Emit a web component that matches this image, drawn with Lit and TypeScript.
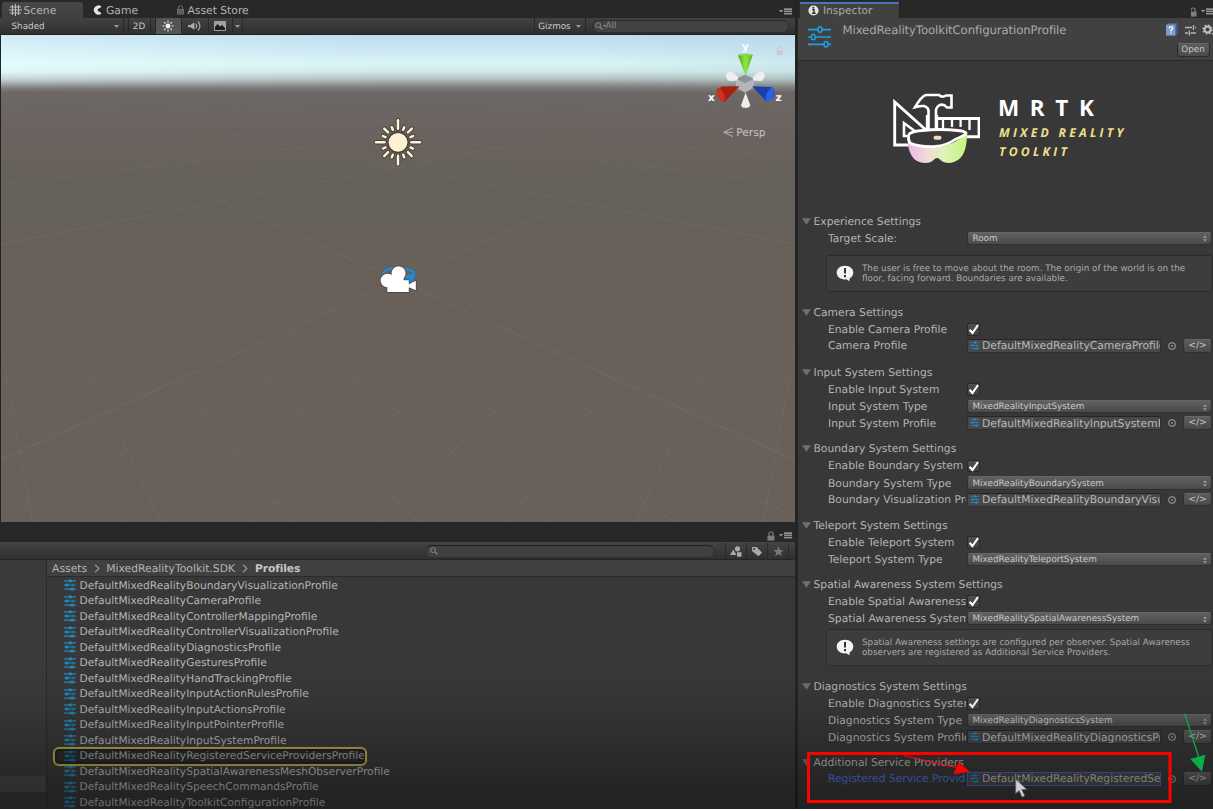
import { LitElement, html, svg, css, nothing } from "lit";
import { customElement } from "lit/decorators.js";
import { classMap } from "lit/directives/class-map.js";

type Row =
  | { kind: "check"; label: string }
  | { kind: "popup"; label: string; value: string }
  | { kind: "object"; label: string; value: string; active?: boolean }
  | { kind: "help"; lines: string[] };

interface Section { title: string; rows: Row[]; }

const SECTIONS: Section[] = [
  { title: "Experience Settings", rows: [
    { kind: "popup", label: "Target Scale:", value: "Room" },
    { kind: "help", lines: ["The user is free to move about the room. The origin of the world is on the", "floor, facing forward. Boundaries are available."] },
  ] },
  { title: "Camera Settings", rows: [
    { kind: "check", label: "Enable Camera Profile" },
    { kind: "object", label: "Camera Profile", value: "DefaultMixedRealityCameraProfile" },
  ] },
  { title: "Input System Settings", rows: [
    { kind: "check", label: "Enable Input System" },
    { kind: "popup", label: "Input System Type", value: "MixedRealityInputSystem" },
    { kind: "object", label: "Input System Profile", value: "DefaultMixedRealityInputSystemProfile" },
  ] },
  { title: "Boundary System Settings", rows: [
    { kind: "check", label: "Enable Boundary System" },
    { kind: "popup", label: "Boundary System Type", value: "MixedRealityBoundarySystem" },
    { kind: "object", label: "Boundary Visualization Profile", value: "DefaultMixedRealityBoundaryVisualizationProfile" },
  ] },
  { title: "Teleport System Settings", rows: [
    { kind: "check", label: "Enable Teleport System" },
    { kind: "popup", label: "Teleport System Type", value: "MixedRealityTeleportSystem" },
  ] },
  { title: "Spatial Awareness System Settings", rows: [
    { kind: "check", label: "Enable Spatial Awareness System" },
    { kind: "popup", label: "Spatial Awareness System Type", value: "MixedRealitySpatialAwarenessSystem" },
    { kind: "help", lines: ["Spatial Awareness settings are configured per observer. Spatial Awareness", "observers are registered as Additional Service Providers."] },
  ] },
  { title: "Diagnostics System Settings", rows: [
    { kind: "check", label: "Enable Diagnostics System" },
    { kind: "popup", label: "Diagnostics System Type", value: "MixedRealityDiagnosticsSystem" },
    { kind: "object", label: "Diagnostics System Profile", value: "DefaultMixedRealityDiagnosticsProfile" },
  ] },
  { title: "Additional Service Providers", rows: [
    { kind: "object", label: "Registered Service Providers", value: "DefaultMixedRealityRegisteredServiceProvidersProfile", active: true },
  ] },
];

const ASSETS = [
  "BoundaryVisualization", "Camera", "ControllerMapping", "ControllerVisualization", "Diagnostics",
  "Gestures", "HandTracking", "InputActionRules", "InputActions", "InputPointer", "InputSystem",
  "RegisteredServiceProviders", "SpatialAwarenessMeshObserver", "SpeechCommands", "ToolkitConfiguration",
].map((n) => `DefaultMixedReality${n}Profile`);
const PINGED = "DefaultMixedRealityRegisteredServiceProvidersProfile";

const sliders = (w = 12, h = 12) => html`<svg width=${w} height=${h} viewBox="0 0 12 12" fill="none" stroke="#2389ba">
  <path d="M0 1.900H12M0 6H12M0 10.100H12" stroke-width="1.100"/>
  <g fill="#2389ba" stroke="none"><circle cx="6.400" cy="1.900" r="1.700"/><circle cx="2.900" cy="6" r="1.700"/><circle cx="8.300" cy="10.100" r="1.700"/></g>
  <path d="M9 4.400v3.200M6 8.500v3.200" stroke-width=".8"/></svg>`;

const lock = (color: string) => html`<svg width="8" height="10" viewBox="0 0 8 10"><rect x=".5" y="4.600" width="7" height="5" fill=${color}/><path d="M2 4.800V3Q2 1 4 1T6 3V4.800" fill="none" stroke=${color} stroke-width="1.200"/></svg>`;

const paneMenu = html`<svg width="13" height="7" viewBox="0 0 13 7"><path d="M0 2h4.200L2.100 4.400z" fill="#999"/><path d="M5 1.100h8M5 3.400h8M5 5.700h8" stroke="#8e8e8e" stroke-width="1.600"/></svg>`;

const magnifier = html`<svg width="8" height="8" viewBox="0 0 8 8" fill="none" stroke="#7c7c7c"><circle cx="3.100" cy="3.100" r="2.400" stroke-width="1.100"/><path d="M5 5l2.600 2.600" stroke-width="1.500"/></svg>`;

/* Perspective grid: lines converge on two vanishing points of the horizon. */
function gridLines() {
  const horizon = 45, cx = 397, v = 444;
  const out = { major: [] as unknown[], minor: [] as unknown[] };
  for (let n = -3; n <= 34; n++) {
    const major = (n - 4) % 10 === 0;
    if (n > 20 && !major) continue;
    const dy = 1 / (0.002364 + 0.000655 * n);
    for (const s of [-1, 1]) {
      const vx = cx + s * v;
      const k = 6;
      out[major ? "major" : "minor"].push(svg`<line x1=${vx} y1=${horizon} x2=${vx - s * v * k} y2=${horizon + dy * k}/>`);
    }
  }
  return out;
}

@customElement("scene-view")
export class SceneView extends LitElement {
  static styles = css`
    :host { display: block; height: 487px; border-left: 1px solid #222; position: relative; overflow: hidden; box-sizing: border-box; }
    svg { display: block; width: 794px; height: 487px; }
    .minor { stroke: #a8ada0; stroke-opacity: .15; stroke-width: .9; }
    .major { stroke: #a8ada0; stroke-opacity: .17; stroke-width: 1; }
    text { font-family: "DejaVu Sans", sans-serif; text-rendering: geometricPrecision; }
    .axis { font-size: 10.5px; font-weight: 700; fill: #fff; text-anchor: middle; }
    .persp { font-size: 10.6px; fill: #c8c6c4; }
  `;
  render() {
    const grid = gridLines();
    const rays = Array.from({ length: 16 }, (_, i) => {
      const a = (i * Math.PI) / 8;
      const [r0, r1] = i % 4 === 0 ? [13.5, 22] : i % 2 === 0 ? [14, 19.5] : [13.5, 16.3];
      return svg`<line x1=${397 + r0 * Math.cos(a)} y1=${107.3 + r0 * Math.sin(a)} x2=${397 + r1 * Math.cos(a)} y2=${107.3 + r1 * Math.sin(a)}/>`;
    });
    return html`<svg viewBox="0 0 794 487">
      <defs>
        <linearGradient id="sky" x1="0" x2="0" y1="0" y2="1">
          <stop offset="0" stop-color="#bfdcee"/><stop offset=".027" stop-color="#c9e5f2"/><stop offset=".058" stop-color="#daf4f6"/>
          <stop offset=".074" stop-color="#d2ebea"/><stop offset=".09" stop-color="#b3c4c2"/><stop offset=".105" stop-color="#858684"/>
          <stop offset=".118" stop-color="#6d6866"/><stop offset=".2" stop-color="#6a625e"/><stop offset=".33" stop-color="#65605a"/>
          <stop offset=".5" stop-color="#686059"/><stop offset="1" stop-color="#696059"/>
        </linearGradient>
        <linearGradient id="glow" x1="0" x2="1" y1="0" y2="0"><stop offset="0" stop-color="#e6ffff" stop-opacity=".7"/><stop offset=".5" stop-color="#e6ffff" stop-opacity="0"/><stop offset=".75" stop-color="#9fc4d4" stop-opacity="0"/><stop offset="1" stop-color="#9fc4d4" stop-opacity=".22"/></linearGradient>
        <linearGradient id="drop" x1="0" x2="0" y1="0" y2="1"><stop offset="0" stop-color="#fff" stop-opacity=".55"/><stop offset=".6" stop-color="#fff"/><stop offset="1" stop-color="#fff" stop-opacity="0"/></linearGradient>
        <linearGradient id="far" x1="0" x2="0" y1="0" y2="1"><stop offset=".12" stop-color="#000"/><stop offset=".24" stop-color="#777"/><stop offset=".45" stop-color="#aaa"/><stop offset="1" stop-color="#fff"/></linearGradient>
        <linearGradient id="near" x1="0" x2="0" y1="0" y2="1"><stop offset=".22" stop-color="#000"/><stop offset=".36" stop-color="#4a4a4a"/><stop offset=".55" stop-color="#808080"/><stop offset="1" stop-color="#eee"/></linearGradient>
        <linearGradient id="green" x1="0" x2="1"><stop offset="0" stop-color="#4f9c1c"/><stop offset=".5" stop-color="#8ce944"/><stop offset="1" stop-color="#5fb327"/></linearGradient>
        <mask id="skyMask"><rect width="794" height="54" fill="url(#drop)"/></mask>
        <mask id="majorMask"><rect width="794" height="487" fill="url(#far)"/></mask>
        <mask id="minorMask"><rect width="794" height="487" fill="url(#near)"/></mask>
      </defs>
      <rect width="794" height="487" fill="url(#sky)"/>
      <rect width="794" height="54" fill="url(#glow)" mask="url(#skyMask)"/>
      <g mask="url(#minorMask)"><g class="minor">${grid.minor}</g></g>
      <g mask="url(#majorMask)"><g class="major">${grid.major}</g></g>
      <g stroke-linecap="round"><g stroke="#45413c" stroke-width="4.400">${rays}</g><circle cx="397" cy="107.300" r="10.800" fill="#45413c"/><g stroke="#fff3d8" stroke-width="2.500">${rays}</g></g>
      <circle cx="397" cy="107.300" r="9.400" fill="#fff0d2"/>
      <path d="M382 239Q383 235 389 234Q397 232.800 406 234.500Q413.500 235.500 413 239Q412 246 406 249" fill="none" stroke="#1c8ad6" stroke-width="2.300"/>
      <path d="M404 241l8.500-3v8l-4 3h-4z" fill="#1c8ad6"/>
      <g fill="#fff" stroke="#4b4742" stroke-width="1.600" paint-order="stroke" stroke-linejoin="round" transform="translate(-.7 .8)"><path d="M387 256.300V251.500A6.800 6.800 0 1 1 391.500 239.500A7 7 0 1 1 404 241.500Q402.500 244 404 244.500H408.500V248.500L415.500 245V254.500L408.500 251.500V256.300Z"/></g>
      <g>
        <path d="M744 39.700l9 4.200v8.600l-9 5.200-9-5.200v-8.600z" fill="#b3b5b9"/><path d="M735 43.900l9 4 9-4-9-4.200z" fill="#8e9095"/>
        <path d="M725 40q1.500-4 5.500-3.500l6.800 5.800-1 3.300-8 .5Q725 44 725 40z" fill="#eee"/><path d="M763.800 40q-1.500-4-5.500-3.500l-6.800 5.800 1 3.300 8 .5Q763.800 44 763.800 40z" fill="#eee"/>
        <path d="M736.800 20h15L744.800 41z" fill="url(#green)"/><ellipse cx="744.300" cy="20" rx="7.400" ry="1.300" fill="#86d548"/>
        <path d="M738.500 51.200L721 51.600Q715 54 717 62L723.500 67Z" fill="#a81f12"/><ellipse cx="719.600" cy="59.700" rx="3.200" ry="7.500" transform="rotate(-24 719.600 59.700)" fill="#c93320"/>
        <path d="M751 51.200L769.500 52Q775.500 54 772.500 62L766 67Z" fill="#1c3fae"/><ellipse cx="769" cy="59.700" rx="3.400" ry="7.500" transform="rotate(24 769 59.700)" fill="#2f5fe4"/>
        <path d="M744.600 57.500l-4.600 13q1 2.500 4.600 2.500t4.800-2.500z" fill="#ececec"/>
      </g>
      <text class="axis" x="744.500" y="15">y</text><text class="axis" x="710.500" y="66">x</text><text class="axis" x="777.500" y="66">z</text>
      <g opacity=".65"><rect x="775.500" y="15.300" width="6.600" height="4.900" fill="#c9bfc0"/><path d="M776.800 15.500v-2q0-1.500 2-1.500t2 1.500v2" fill="none" stroke="#c9bfc0"/></g>
      <path d="M732 92.800l-9.300 4.500 9.300 4.300M723 97.300h9" fill="none" stroke="#b5b1ae" stroke-width="1"/>
      <text class="persp" x="735.300" y="101">Persp</text>
    </svg>`;
  }
}

@customElement("inspector-row")
export class InspectorRow extends LitElement {
  static properties = { row: { attribute: false } };
  declare row: Row;
  static styles = css`
    :host { display: block; }
    .row { display: flex; align-items: center; height: 17.3px; padding-left: 30px; }
    .row.object { margin-top: -.8px; }
    .label { width: 138px; margin-right: 1px; flex: none; overflow: hidden; white-space: nowrap; line-height: 17px; }
    .active .label { color: #4a74d8; }
    .popup { flex: none; width: 245px; height: 13.5px; box-sizing: border-box; border-radius: 3px; border: 1px solid #303030; border-top-color: #666; background: linear-gradient(#606060, #4a4a4a); font-size: 8.82px; line-height: 12px; padding: 1px 4px 0 4.5px; display: flex; justify-content: space-between; align-items: center; color: #cacaca; }
    .tick { width: 12.5px; height: 12.5px; box-sizing: border-box; background: linear-gradient(#4f4f4f, #404040); border: 1px solid #292929; border-radius: 2px; }
    .tick svg { display: block; margin: -1.2px 0 0 .3px; overflow: visible; }
    .field { width: 194px; height: 13.7px; box-sizing: border-box; flex: none; background: #484848; border: 1px solid #303030; border-top-color: #252525; display: flex; align-items: center; padding-left: 2px; gap: 2.5px; overflow: hidden; white-space: nowrap; line-height: 13px; color: #b9b9b9; }
    .field svg { flex: none; margin-bottom: .5px; }
    .active .field { border-color: #3f62c0; }
    .pick { width: 8px; height: 8px; margin: 0 7.5px 0 6.5px; flex: none; }
    .code { width: 29px; height: 13.5px; flex: none; box-sizing: border-box; border: 1px solid #303030; border-top-color: #666; border-radius: 3px; background: linear-gradient(#5c5c5c, #494949); font-size: 9.3px; line-height: 11.5px; text-align: center; color: #c4c4c4; }
    .help { margin: 8px 0 0 28px; height: 37px; width: 387px; box-sizing: border-box; border: 1px solid #2b2b2b; border-radius: 3px; background: #3d3d3d; display: flex; align-items: center; padding-left: 9px; gap: 8px; font-size: 8.78px; line-height: 10.3px; color: #a9a9a9; white-space: nowrap; }
    .help div:first-of-type { padding-top: .4px; }
    .help.tight { margin-top: 2px; }
  `;
  render() {
    const r = this.row;
    if (r.kind === "help") {
      return html`<div class=${classMap({ help: true, tight: r.lines[0].startsWith("Spatial") })}>
        <svg width="18" height="17" viewBox="0 0 18 17"><path d="M9 .8C13.600.8 17.300 3.700 17.300 7.600 17.300 10.600 15.400 12.600 13.600 13.500L13.400 16.200 10.300 14.300Q9 14.500 8 14.400C3.700 14.200.7 11.300.7 7.600.7 3.700 4.400.8 9 .8z" fill="#f4f4f4"/><path d="M9 3v5.600M9 10v2.200" stroke="#333" stroke-width="2"/></svg>
        <div>${r.lines.map((l) => html`<div>${l}</div>`)}</div></div>`;
    }
    return html`<div class=${classMap({ row: true, object: r.kind === "object", active: r.kind === "object" && !!r.active })}>
      <div class="label">${r.label}</div>
      ${r.kind === "check" ? html`<div class="tick"><svg width="11" height="12" viewBox="0 0 11 12"><path d="M1.600 6.800L4.400 10 10 2" fill="none" stroke="#fff" stroke-width="2.100"/></svg></div>` : nothing}
      ${r.kind === "popup" ? html`<div class="popup"><span>${r.value}</span><svg width="4" height="7" viewBox="0 0 4 7"><path d="M0 2.800L2 .3 4 2.800zM0 4.200L2 6.700 4 4.200z" fill="#999"/></svg></div>` : nothing}
      ${r.kind === "object" ? html`<div class="field">${sliders(9.5, 9)}<span>${r.value}</span></div>
        <svg class="pick" viewBox="0 0 7 7"><circle cx="3.500" cy="3.500" r="2.900" fill="none" stroke="#a2a2a2" stroke-width=".9"/><circle cx="3.500" cy="3.500" r=".8" fill="#999"/></svg>
        <div class="code">&lt;/&gt;</div>` : nothing}
    </div>`;
  }
}

@customElement("inspector-panel")
export class InspectorPanel extends LitElement {
  static styles = css`
    :host { display: flex; flex-direction: column; background: #383838; overflow: hidden; }
    .tabs { height: 18px; background: #282828; display: flex; align-items: flex-end; justify-content: space-between; flex: none; }
    .tab { width: 99px; height: 16px; margin-left: 2px; background: #414141; border-top: 2px solid #4a74b8; box-sizing: border-box; display: flex; align-items: center; gap: 4.5px; padding: 0 0 1px 7.5px; color: #a9a9a9; box-shadow: 1px 0 #1f1f1f; font-size: 10.6px; }
    .tab svg { margin-bottom: 1px; }
    .tools { display: flex; align-items: center; gap: 3px; height: 13px; overflow: hidden; margin-right: -1px; }
    .tools svg { flex: none; }
    .tools svg:first-child { margin-left: -2px; margin-right: 1px; }
    .head { height: 43px; flex: none; box-sizing: border-box; background: #414141; border-bottom: 1px solid #2a2a2a; display: flex; padding: 8px 3px 0 9px; }
    .name { font-size: 11.7px; letter-spacing: -.09px; margin-left: 10.5px; line-height: 9px; color: #aaa; flex: 1; }
    .side { display: flex; flex-direction: column; align-items: flex-end; width: 60px; margin-top: -3.5px; margin-right: -3px; }
    .icons { display: flex; gap: 6.5px; height: 14px; align-items: center; margin-right: -1px; }
    .open { margin: 6px 3.5px 0 0; width: 33px; height: 14px; box-sizing: border-box; border: 1px solid #2c2c2c; border-top-color: #666; border-radius: 3px; background: linear-gradient(#5c5c5c, #4a4a4a); font-size: 8.8px; line-height: 13px; text-align: center; color: #c4c4c4; }
    .logo { height: 151.5px; flex: none; display: flex; padding: 32px 0 0 94px; box-sizing: border-box; }
    .words { margin-left: 18px; font-family: "Open Sans", sans-serif; white-space: nowrap; }
    .mrtk { font-size: 22.5px; font-weight: 700; letter-spacing: 10.6px; color: #fff; line-height: 30px; }
    .sub { font-size: 12.2px; font-weight: 700; font-style: italic; letter-spacing: 3.25px; color: #eee08a; line-height: 19px; padding-left: 1px; }
    .sections { display: grid; grid-template-rows: 91px 60px 76.5px 76.4px 59px 102px 76.3px 56px; }
    .title { display: flex; align-items: center; height: 17.3px; padding-left: 4px; gap: 2.5px; white-space: nowrap; }
  `;
  render() {
    return html`
      <div class="tabs">
        <div class="tab"><svg width="11" height="11" viewBox="0 0 11 11"><circle cx="5.500" cy="5.500" r="5.100" fill="#e4e4e4"/><path d="M4.200 4.800h1.800v3.400M4 8.300h3.600" stroke="#333" fill="none" stroke-width="1.400"/><circle cx="5.400" cy="2.800" r="1" fill="#333"/></svg>Inspector</div>
        <div class="tools">${lock("#7e7e7e")}${paneMenu}</div>
      </div>
      <div class="head">
        <svg width="25" height="23" viewBox="0 0 25 23" fill="none" stroke="#1e9fe0" stroke-width="1.700"><path d="M1 3.600h10M15 3.600h9M1 11h3.500M8.500 11H24M1 18.300h16M21 18.300h3"/><g stroke-width="1.500"><ellipse cx="13" cy="3.600" rx="2" ry="2.800"/><ellipse cx="6.300" cy="11" rx="2" ry="2.800"/><ellipse cx="19" cy="18.300" rx="2" ry="2.800"/></g></svg>
        <div class="name">MixedRealityToolkitConfigurationProfile</div>
        <div class="side">
          <div class="icons">
            <svg width="13" height="13" viewBox="0 0 13 13"><path d="M1 2L3 .5h9.500v10l-1.700 2H1z" fill="#5c7fb4"/><path d="M1 2h9.500v10.500H1z" fill="#7f9dc6"/><path d="M10.500 2l2-1.500v10l-2 2z" fill="#3d598c"/><path d="M4.200 5.300Q4.300 3.800 6 3.800T7.700 5.300Q7.600 6.400 6 7.200V8.400M6 9.400v1.300" stroke="#fff" fill="none" stroke-width="1.300"/></svg>
            <svg width="11" height="12" viewBox="0 0 11 12" stroke="#b5b5b5" fill="none" stroke-width="1.300"><path d="M0 3.500h7M10 3.500h1M0 9h3M5.500 9H11M8.500 1v5M4.300 6.500v5"/></svg>
            <svg width="12" height="12" viewBox="0 0 12 12"><circle cx="5.500" cy="5.500" r="3" fill="none" stroke="#c4c4c4" stroke-width="1.900"/><circle cx="5.500" cy="5.500" r="4.400" fill="none" stroke="#c4c4c4" stroke-width="1.400" stroke-dasharray="1.700 1.750"/><path d="M9.500 9.300h3l-1.500 2z" fill="#c4c4c4"/></svg>
          </div>
          <div class="open">Open</div>
        </div>
      </div>
      <div class="logo">
        <svg width="88" height="71" viewBox="0 0 88 71">
          <defs><linearGradient id="visor"><stop offset="0" stop-color="#eeb6e6"/><stop offset=".35" stop-color="#f3dcd5"/><stop offset=".6" stop-color="#def3b8"/><stop offset="1" stop-color="#c5f57c"/></linearGradient></defs>
          <g fill="none" stroke="#fff" stroke-width="2.900">
            <path d="M17 52H2.700V9L34 37"/><path d="M15 43H12V30L24 39" stroke-width="2.600"/>
            <path d="M46 25.500H87V43.700H72"/><path d="M51 26v10M60 26v8M68.600 26v8M77.500 26v11" stroke-width="2.300"/>
            <path d="M36.500 36V19Q37 14.500 32 13Q28 12.800 23 14.200Q29.500 3.200 34 2H47Q50 5 54 2.500H59.500V14.500H55Q51 10 47 12.500Q43.500 15 44 19V36" stroke-width="2.600"/>
            <path d="M35 22V37M45 22V37" stroke-width="2.300"/>
          </g>
          <path d="M15.500 43Q15.500 70 33 70Q39 70 41.500 67Q45 63 48.500 67Q51 70 58 70Q75 68 75 41Q60 53 44 54.500Q28 55 15.500 43z" fill="url(#visor)"/>
          <path d="M16.500 42.500Q17.500 38.500 30 37.500Q48 35.500 66 37.500Q74.500 38.500 74 40.500Q71 43.500 63 46.500Q55 52.500 43 53.500Q26 54 18 50Q16 47 16.500 42.500z" fill="#383838" stroke="#fff" stroke-width="2.800"/>
          <rect x="41.500" y="42.800" width="8" height="4" rx="2" fill="#f5d9c0"/>
        </svg>
        <div class="words"><div class="mrtk">MRTK</div><div class="sub">MIXED REALITY</div><div class="sub">TOOLKIT</div></div>
      </div>
      <div class="sections">
        ${SECTIONS.map((s) => html`<div>
          <div class="title"><svg width="9" height="7" viewBox="0 0 9 7"><path d="M0 .3h9L4.500 6.700z" fill="#6f6f6f"/></svg>${s.title}</div>
          ${s.rows.map((r) => html`<inspector-row .row=${r}></inspector-row>`)}
        </div>`)}
      </div>`;
  }
}

@customElement("project-panel")
export class ProjectPanel extends LitElement {
  static styles = css`
    :host { display: flex; flex-direction: column; flex: 1; min-height: 0; }
    .strip { height: 20px; flex: none; background: #282828; display: flex; align-items: center; justify-content: flex-end; gap: 4px; padding: 7px 3px 0 0; box-sizing: border-box; }
    .bar { height: 18px; flex: none; box-sizing: border-box; background: linear-gradient(#424242, #303030); border-top: 1px solid #454545; border-bottom: 1px solid #252525; display: flex; align-items: center; padding-left: 425px; }
    .search { width: 290px; height: 13px; box-sizing: border-box; border-radius: 7px; background: #404040; border: 1px solid #303030; border-top-color: #222; display: flex; align-items: center; padding-left: 4px; }
    .btns { display: flex; margin-left: 10px; height: 16px; }
    .btns div { width: 21px; box-sizing: border-box; border-left: 1px solid #2a2a2a; display: flex; align-items: center; justify-content: center; }
    .btns div:last-child { width: 1px; }
    .body { flex: 1; display: flex; min-height: 0; }
    .tree { width: 47px; flex: none; box-sizing: border-box; border-right: 1px solid #2a2a2a; background: #3a3a3a; padding-top: 216px; }
    .sel { height: 15.5px; background: #484848; }
    .main { flex: 1; background: #383838; overflow: hidden; }
    .crumbs { height: 17px; box-sizing: border-box; background: #404040; border-bottom: 1px solid #2b2b2b; display: flex; align-items: center; padding-left: 5px; gap: 6.5px; color: #b4b4b4; font-size: 10.8px; }
    .crumbs b { color: #c6c6c6; letter-spacing: -.12px; font-size: 10.7px; margin-left: 1px; }
    .item { height: 15.53px; display: flex; align-items: center; gap: 3.5px; padding-left: 17px; white-space: nowrap; color: #b6b6b6; line-height: 15px; font-size: 10.65px; }
    .list { position: relative; padding-top: .4px; }
    .pinged { color: #cacaca; }
    .ring { position: absolute; left: 5.5px; top: 170px; width: 314.5px; height: 18.5px; box-sizing: border-box; border: 2px solid #b3a64c; border-radius: 6px; box-shadow: 0 0 2px #a3973d55, inset 0 0 4px #000a; background: #0003; }
  `;
  render() {
    const chev = html`<svg width="6" height="9" viewBox="0 0 6 9"><path d="M1 .8l3.800 3.700L1 8.200" fill="none" stroke="#8d8d8d" stroke-width="1.500"/></svg>`;
    return html`
      <div class="strip">${lock("#7e7e7e")}${paneMenu}</div>
      <div class="bar">
        <div class="search">${magnifier}</div>
        <div class="btns">
          <div><svg width="12" height="11" viewBox="0 0 12 11" fill="#aaa"><circle cx="7.500" cy="2.800" r="2.600"/><path d="M0 9l3.300-5.500L6.500 9z"/><rect x="7" y="6.200" width="4.500" height="4.500"/></svg></div>
          <div><svg width="12" height="11" viewBox="0 0 12 11"><path d="M1 1h4.500L11 6.500 7.500 10.300 1 5z" fill="#aaa"/><circle cx="3" cy="3" r="1" fill="#333"/></svg></div>
          <div><svg width="11" height="11" viewBox="0 0 11 11"><path d="M5.500.3L7 4h3.700L7.800 6.400 8.900 10.300 5.500 8 2.100 10.300 3.200 6.400.3 4H4z" fill="#777"/></svg></div>
          <div></div>
        </div>
      </div>
      <div class="body">
        <div class="tree"><div class="sel"></div></div>
        <div class="main">
          <div class="crumbs"><span>Assets</span>${chev}<span>MixedRealityToolkit.SDK</span>${chev}<b>Profiles</b></div>
          <div class="list">
            <div class="ring"></div>
            ${ASSETS.map((a) => html`<div class=${classMap({ item: true, pinged: a === PINGED })}>${sliders()}<span>${a}</span></div>`)}
          </div>
        </div>
      </div>`;
  }
}

@customElement("app-root")
export class AppRoot extends LitElement {
  static styles = css`
    :host { display: block; width: 1213px; height: 811px; overflow: hidden; background: #fff; font: 10.75px "DejaVu Sans", sans-serif; color: #b4b4b4; text-rendering: geometricPrecision; }
    .app { position: relative; height: 809px; display: flex; background: #242424; overflow: hidden; }
    .left { width: 795px; display: flex; flex-direction: column; }
    inspector-panel { width: 415px; margin-left: 3px; flex: none; }
    .tabs { height: 18px; background: #282828; display: flex; align-items: flex-end; flex: none; }
    .tab { height: 16px; display: flex; align-items: center; gap: 3px; box-sizing: border-box; }
    .tab svg { margin-bottom: .5px; }
    .scene { width: 81px; margin-left: 1.5px; padding-left: 7px; gap: 2px; background: linear-gradient(#484848, #404040); border-radius: 3px 3px 0 0; }
    .game { margin-left: 10px; gap: 4.5px; width: 83px; }
    .store { flex: 1; }
    .tabs > svg { margin: 0 3px 3px 0; }
    .bar { height: 17px; flex: none; box-sizing: border-box; background: linear-gradient(#424242, #2f2f2f); border-bottom: 1px solid #202020; display: flex; font-size: 8.8px; color: #cacaca; }
    .cell { box-sizing: border-box; border-right: 1px solid #282828; display: flex; align-items: center; justify-content: center; }
    .cell span { padding-top: 1.5px; }
    .shaded { width: 123.5px; padding: 0 4px 0 11.5px; justify-content: space-between; }
    .gap { width: 5px; }
    .two { width: 22px; }
    .light { width: 26px; background: #545454; }
    .audio { width: 27px; }
    .fx { width: 24px; }
    .drop { width: 10px; }
    .fill { width: 292px; }
    .gizmos { width: 51px; gap: 5px; }
    .find { width: 197px; height: 13px; margin: 1.5px 0 0 6px; box-sizing: border-box; border-radius: 7px; border: 1px solid #2c2c2c; background: #424242; display: flex; align-items: center; color: #8a8a8a; padding-left: 2px; gap: 0; }
    .shade { position: absolute; inset: 660px 0 0 0; background: linear-gradient(transparent, #0000000c 25%, #0000006b); pointer-events: none; }
    .notes { position: absolute; left: 0; top: 0; }
  `;
  render() {
    const down = html`<svg width="5" height="3" viewBox="0 0 5 3"><path d="M0 0h5L2.500 3z" fill="#999"/></svg>`;
    return html`<div class="app">
      <div class="left">
        <div class="tabs">
          <div class="tab scene"><svg width="13" height="12" viewBox="0 0 13 12" stroke="#bdbdbd" stroke-width="1.100"><path d="M3.500 1v10M6.500 0v12M9.500 1v10M1 3h11M0 6h13M1 9h11"/></svg>Scene</div>
          <div class="tab game"><svg width="9" height="10" viewBox="0 0 9 10"><path d="M8.500 1.500A4.600 4.600 0 1 0 8.500 8.500L7 7Q4.500 6.500 4.500 5T7 3z" fill="#e4e4e4"/></svg>Game</div>
          <div class="tab store"><svg width="9" height="10" viewBox="0 0 9 10"><rect x="1" y="4" width="7" height="5.500" fill="#6e6e6e"/><path d="M2.500 4V1.500Q4.500 0 6.500 1.500V4" fill="none" stroke="#6e6e6e"/><path d="M2 6h5M2 8h5" stroke="#444" stroke-width=".8"/></svg>Asset Store</div>
          ${paneMenu}
        </div>
        <div class="bar">
          <div class="cell shaded"><span>Shaded</span>${down}</div><div class="cell gap"></div>
          <div class="cell two"><span>2D</span></div><div class="cell gap"></div>
          <div class="cell light"><svg width="12" height="12" viewBox="0 0 12 12" stroke="#f0f0f0" stroke-width="1.100"><circle cx="6" cy="6" r="2.400" fill="#f4f4f4" stroke="none"/><path d="M6 .5v2M6 9.500v2M.5 6h2M9.500 6h2M2.100 2.100l1.400 1.400M8.500 8.500l1.400 1.400M2.100 9.900l1.400-1.400M8.500 3.500l1.400-1.400"/></svg></div>
          <div class="cell audio"><svg width="13" height="12" viewBox="0 0 13 12" fill="none" stroke="#aaa" stroke-width="1.200"><path d="M0 5h2.500L6.500 2.200v7.600L2.500 7.200H0z" fill="#aaa" stroke="none"/><path d="M8 3.800Q9.400 6 8 8.200M10 1.500Q13.800 6 10 10.500"/></svg></div>
          <div class="cell fx"><svg width="12" height="10" viewBox="0 0 12 10"><rect width="12" height="10" rx="1" fill="#a0a0a0"/><path d="M1 9V6l2.500-3L6 5.500 8 4l3 3v2z" fill="#1c1c1c"/></svg></div>
          <div class="cell drop">${down}</div>
          <div class="cell fill"></div>
          <div class="cell gizmos"><span>Gizmos</span>${down}</div>
          <div class="find">${magnifier}<svg width="3" height="2" viewBox="0 0 5 3"><path d="M0 0h5L2.500 3z" fill="#999"/></svg><span>All</span></div>
        </div>
        <scene-view></scene-view>
        <project-panel></project-panel>
      </div>
      <inspector-panel></inspector-panel>
      <div class="shade"></div>
      <svg class="notes" width="1213" height="809" viewBox="0 0 1213 809">
        <path d="M1015.700 779.200v14.300l3.400-3 3 6.500 2.600-1.200-3-6.200 4.900-.3z" fill="#d0d0d0" stroke="#666" stroke-width=".7"/>
        <rect x="808.500" y="753.500" width="361.500" height="48" fill="none" stroke="#f00" stroke-width="3"/>
        <path d="M904 755.500L958 768" stroke="#f00" stroke-width="1.200"/><path d="M958.700 762.300L969.700 771.700 953.300 774z" fill="#f00"/>
        <path d="M1184.700 713.500L1199 758" stroke="#0cad4b" stroke-width="1.200"/><path d="M1190.300 759L1205.300 754.700 1202 771.700z" fill="#0cad4b"/>
      </svg>
    </div>`;
  }
}
